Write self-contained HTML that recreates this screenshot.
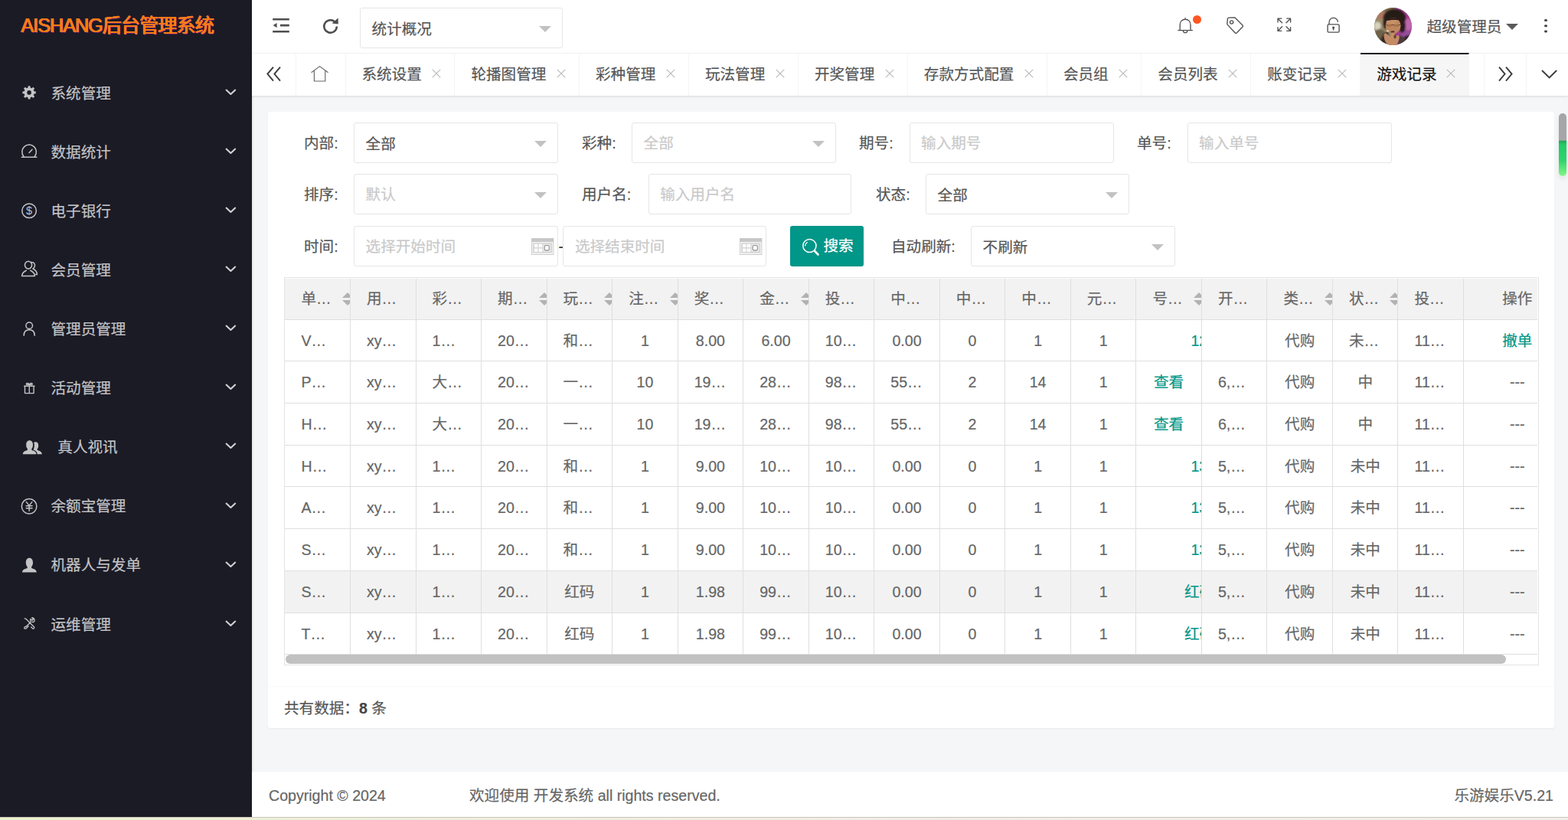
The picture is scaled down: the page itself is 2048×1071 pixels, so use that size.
<!DOCTYPE html><html lang="zh-CN"><head><meta charset="utf-8"><title>AISHANG后台管理系统</title><style>
*{box-sizing:border-box;margin:0;padding:0}
html,body{width:2048px;height:1071px;overflow:hidden;background:#f5f6f8}
body{position:relative;font-family:"Liberation Sans","Noto Sans CJK SC",sans-serif;font-size:19.6px;color:#555;-webkit-font-smoothing:antialiased;-webkit-text-stroke:.2px currentColor}
.abs{position:absolute}
svg{position:absolute;overflow:visible}
/* sidebar */
#side{position:absolute;left:0;top:0;width:329px;height:1067px;background:#1b1b26;box-shadow:1px 0 2px rgba(0,0,0,.1)}
#logo{-webkit-text-stroke:0;position:absolute;left:27.4px;top:14px;height:38px;line-height:38px;font-size:25.2px;letter-spacing:-1px;color:#fa7b0a;white-space:nowrap;
 text-shadow:-.45px 0 0 #ff7d4a,.45px 0 0 #ff7d4a,0 .45px 0 #ff7d4a,0 -.45px 0 #ff7d4a,.9px .7px 0 rgba(235,40,220,.42),-.8px -.5px 0 rgba(255,70,60,.3)}
.mi{position:absolute;left:0;width:329px;height:77px;line-height:78.5px;color:#c4c4c6;white-space:nowrap}
.mi span{position:absolute;left:66.5px;top:0}
/* header */
#hd{position:absolute;left:329px;top:0;width:1719px;height:70px;background:#fff;border-bottom:1px solid #f6f6f6}
#tabs{position:absolute;left:329px;top:70px;width:1719px;height:55px;background:#fff;box-shadow:0 1px 3px rgba(0,0,0,.12)}
.tab{position:absolute;top:0;height:55px;line-height:54px;border-right:1px solid #f5f5f5;color:#555;white-space:nowrap}
.tab span{position:absolute;left:21px;top:0}
.tab.on{background:#f6f6f6;color:#111;top:-1px;height:56px;border-top:2px solid #191a23;line-height:52px}
.sep{position:absolute;top:0;width:1px;height:55px;background:#f4f4f4}
/* card */
#card{position:absolute;left:350px;top:145.6px;width:1680px;height:805px;background:#fff;border-radius:3px;box-shadow:0 1px 2px rgba(0,0,0,.06)}
.lb{position:absolute;height:53px;line-height:55.6px;color:#555;white-space:nowrap}
.ip{position:absolute;height:53px;line-height:55px;border:1px solid #e6e6e6;border-radius:3px;background:#fff;padding-left:14.6px;color:#555;white-space:nowrap}
.ip.ph{color:#c9c9c9;line-height:52px}
.ip i{position:absolute;right:14px;top:23px;width:0;height:0;border:8.4px solid transparent;border-top-color:#c2c2c2;border-bottom-width:0}
#btn{position:absolute;left:1032.4px;top:295px;width:96px;height:53px;line-height:53px;background:#009688;color:#fff;border-radius:3px;white-space:nowrap}
/* table */
#tb{position:absolute;left:371px;top:362.4px;width:1639px;height:506.4px;border:1px solid #e4e4e4;overflow:hidden;background:#fff}
.r{position:absolute;left:0;width:1700px;border-bottom:1px solid #dfdfdf;color:#666}
.r.h{background:#f2f2f2}
.r.hv{background:#f2f2f2}
.c{position:absolute;top:0;height:100%;border-right:1px solid #dfdfdf;overflow:hidden;white-space:nowrap;padding:0 21px;text-align:left}
.c.m{text-align:center;padding:0}
.c a{color:#009688}
.c .st{position:absolute;left:74.5px;top:18px;width:14px;height:17px}
.c .st:before,.c .st:after{content:"";position:absolute;left:0;width:0;height:0;border:7px solid transparent}
.c .st:before{top:-7px;border-bottom-color:#b2b2b2}
.c .st:after{top:9.5px;border-top-color:#b2b2b2}
#foot{position:absolute;left:329px;top:1008px;width:1719px;height:59px;background:#fff;line-height:62px;color:#666;white-space:nowrap}
#strip{position:absolute;left:0;top:1067px;width:2048px;height:4px;background:linear-gradient(90deg,#eaf1cd 0,#efeee0 30%,#f2ece6 60%,#f1eeea 100%);border-top:1px solid #cac6b8}
</style></head><body>
<div id="side"><div id="logo">AISHANG后台管理系统</div>
<div class="mi" style="top:82.6px"><svg style="left:23px;top:23.5px" width="34" height="30" viewBox="0 0 34 30" ><path fill-rule="evenodd" fill="#c4c4c6" d="M21.51 13.31 L23.79 13.52 L23.79 16.28 L21.51 16.49 L20.75 18.30 L22.22 20.07 L20.27 22.02 L18.50 20.55 L16.69 21.31 L16.48 23.59 L13.72 23.59 L13.51 21.31 L11.70 20.55 L9.93 22.02 L7.98 20.07 L9.45 18.30 L8.69 16.49 L6.41 16.28 L6.41 13.52 L8.69 13.31 L9.45 11.50 L7.98 9.73 L9.93 7.78 L11.70 9.25 L13.51 8.49 L13.72 6.21 L16.48 6.21 L16.69 8.49 L18.50 9.25 L20.27 7.78 L22.22 9.73 L20.75 11.50Z M12.30 14.90 a2.80 2.80 0 1 0 5.60 0 a2.80 2.80 0 1 0 -5.60 0Z"/></svg><span>系统管理</span><svg style="left:292px;top:31.3px" width="18" height="14" viewBox="0 0 18 14" ><path fill="none" stroke="#d2d2d4" stroke-width="2.1" stroke-linecap="round" stroke-linejoin="round" d="M3.6 3.6 L9.4 9 L15.2 3.6"/></svg></div>
<div class="mi" style="top:159.7px"><svg style="left:23px;top:23.5px" width="34" height="30" viewBox="0 0 34 30" ><path fill="none" stroke="#c4c4c6" stroke-width="1.5" stroke-linecap="round" stroke-linejoin="round" d="M8 21.4 A9.3 9.3 0 1 1 22.2 21.4 M5.3 22.2 H24.9 M15.1 16.4 L19 12.2"/></svg><span>数据统计</span><svg style="left:292px;top:31.3px" width="18" height="14" viewBox="0 0 18 14" ><path fill="none" stroke="#d2d2d4" stroke-width="2.1" stroke-linecap="round" stroke-linejoin="round" d="M3.6 3.6 L9.4 9 L15.2 3.6"/></svg></div>
<div class="mi" style="top:236.8px"><svg style="left:23px;top:23.5px" width="34" height="30" viewBox="0 0 34 30" ><circle cx="15.1" cy="15.3" r="9.3" fill="none" stroke="#c4c4c6" stroke-width="1.5" stroke-linecap="round" stroke-linejoin="round"/><text x="15.1" y="20.3" font-family="Liberation Sans,sans-serif" font-size="14.5" text-anchor="middle" fill="#c4c4c6">$</text></svg><span>电子银行</span><svg style="left:292px;top:31.3px" width="18" height="14" viewBox="0 0 18 14" ><path fill="none" stroke="#d2d2d4" stroke-width="2.1" stroke-linecap="round" stroke-linejoin="round" d="M3.6 3.6 L9.4 9 L15.2 3.6"/></svg></div>
<div class="mi" style="top:313.9px"><svg style="left:23px;top:23.5px" width="34" height="30" viewBox="0 0 34 30" ><path fill="none" stroke="#c4c4c6" stroke-width="1.5" stroke-linecap="round" stroke-linejoin="round" d="M14 14.2 a4.6 5 0 1 1 0.1 0 M5.6 23.6 C5.6 18.6 9.4 17.4 11.4 16.2 M16.6 16.2 C18.6 17.4 22.4 18.6 22.4 23.6 H5.6 M18.2 5.6 C21.4 5.4 23 8 22.4 10.6 C22 12.4 21 13.4 20 14 C22.6 15.4 25.4 16.6 25.4 21.4 H23.6"/></svg><span>会员管理</span><svg style="left:292px;top:31.3px" width="18" height="14" viewBox="0 0 18 14" ><path fill="none" stroke="#d2d2d4" stroke-width="2.1" stroke-linecap="round" stroke-linejoin="round" d="M3.6 3.6 L9.4 9 L15.2 3.6"/></svg></div>
<div class="mi" style="top:391.0px"><svg style="left:23px;top:23.5px" width="34" height="30" viewBox="0 0 34 30" ><circle cx="15.2" cy="10.2" r="4.3" fill="none" stroke="#c4c4c6" stroke-width="1.5" stroke-linecap="round" stroke-linejoin="round" stroke-width="1.7"/><path fill="none" stroke="#c4c4c6" stroke-width="1.5" stroke-linecap="round" stroke-linejoin="round" stroke-width="1.7" d="M8.2 23.2 C8.2 18 11.2 15.8 15.2 15.8 C19.2 15.8 22.2 18 22.2 23.2"/></svg><span>管理员管理</span><svg style="left:292px;top:31.3px" width="18" height="14" viewBox="0 0 18 14" ><path fill="none" stroke="#d2d2d4" stroke-width="2.1" stroke-linecap="round" stroke-linejoin="round" d="M3.6 3.6 L9.4 9 L15.2 3.6"/></svg></div>
<div class="mi" style="top:468.1px"><svg style="left:23px;top:23.7px" width="34" height="30" viewBox="0 0 34 30" ><g transform="translate(15.2 15) scale(0.92 0.92) translate(-15.2 -15)"><path fill="none" stroke="#c4c4c6" stroke-width="1.5" stroke-linecap="round" stroke-linejoin="round" stroke-width="1.7" d="M9 12 H21.6 V22.2 H9 Z M8 12 H22.6 M15.3 9.6 V22.2 M15.3 9.4 C13.6 7.4 11 7.6 11 9.2 C11 10.2 12.6 10.4 15.3 9.6 C18 10.4 19.6 10.2 19.6 9.2 C19.6 7.6 17 7.4 15.3 9.4"/></g></svg><span>活动管理</span><svg style="left:292px;top:31.3px" width="18" height="14" viewBox="0 0 18 14" ><path fill="none" stroke="#d2d2d4" stroke-width="2.1" stroke-linecap="round" stroke-linejoin="round" d="M3.6 3.6 L9.4 9 L15.2 3.6"/></svg></div>
<div class="mi" style="top:545.2px"><svg style="left:23px;top:23.5px" width="34" height="30" viewBox="0 0 34 30" ><path fill="#c4c4c6" d="M6.8 24.2 C6.8 21 9.6 20.2 12.4 19 C13.2 18.6 13.2 17.6 12.6 16.8 C11.4 15.4 11.2 13.6 11.2 11.8 C11.2 8.6 12.8 6.2 15.6 6.2 C18.4 6.2 20 8.6 20 11.8 C20 13.6 19.8 15.4 18.6 16.8 C18 17.6 18 18.6 18.8 19 C21.6 20.2 24.4 21 24.4 24.2 Z"/><path fill="#c4c4c6" d="M21.2 9.2 C21.6 8.6 22.6 8.2 23.6 8.2 C26 8.2 27.2 10.2 27.2 12.8 C27.2 14.4 27 15.8 26 17 C25.4 17.8 25.6 18.6 26.2 19 C28.8 20 31.8 21 31.8 24.2 H25.8 C25.8 21.4 23.8 19.6 20.6 18.4 C21.6 16.6 21.8 14.6 21.8 12 C21.8 11 21.6 10 21.2 9.2 Z"/></svg><span style="left:75.3px">真人视讯</span><svg style="left:292px;top:31.3px" width="18" height="14" viewBox="0 0 18 14" ><path fill="none" stroke="#d2d2d4" stroke-width="2.1" stroke-linecap="round" stroke-linejoin="round" d="M3.6 3.6 L9.4 9 L15.2 3.6"/></svg></div>
<div class="mi" style="top:622.3px"><svg style="left:23px;top:23.5px" width="34" height="30" viewBox="0 0 34 30" ><circle cx="15.1" cy="15.3" r="9.8" fill="none" stroke="#c4c4c6" stroke-width="1.5" stroke-linecap="round" stroke-linejoin="round"/><path fill="none" stroke="#c4c4c6" stroke-width="1.5" stroke-linecap="round" stroke-linejoin="round" stroke-width="1.6" d="M11.4 9.6 L15.1 14.4 L18.8 9.6 M15.1 14.4 V21.2 M11.2 14.8 H19 M11.2 17.8 H19"/></svg><span>余额宝管理</span><svg style="left:292px;top:31.3px" width="18" height="14" viewBox="0 0 18 14" ><path fill="none" stroke="#d2d2d4" stroke-width="2.1" stroke-linecap="round" stroke-linejoin="round" d="M3.6 3.6 L9.4 9 L15.2 3.6"/></svg></div>
<div class="mi" style="top:699.4px"><svg style="left:23px;top:23.5px" width="34" height="30" viewBox="0 0 34 30" ><path fill="#c4c4c6" d="M6 24.6 C6 21 9 20.4 12 19.2 C13 18.8 13 17.8 12.4 17 C11.2 15.6 10.8 13.8 10.8 11.8 C10.8 8.4 12.4 5.8 15.4 5.8 C18.4 5.8 20 8.4 20 11.8 C20 13.8 19.6 15.6 18.4 17 C17.8 17.8 17.8 18.8 18.8 19.2 C21.8 20.4 24.8 21 24.8 24.6 Z"/></svg><span>机器人与发单</span><svg style="left:292px;top:31.3px" width="18" height="14" viewBox="0 0 18 14" ><path fill="none" stroke="#d2d2d4" stroke-width="2.1" stroke-linecap="round" stroke-linejoin="round" d="M3.6 3.6 L9.4 9 L15.2 3.6"/></svg></div>
<div class="mi" style="top:776.5px"><svg style="left:22.6px;top:22.7px" width="34" height="30" viewBox="0 0 34 30" ><g transform="translate(15.2 15) scale(0.88 0.88) translate(-15.2 -15)"><path fill="none" stroke="#c4c4c6" stroke-width="1.5" stroke-linecap="round" stroke-linejoin="round" stroke-width="1.75" d="M8.4 8 L10.2 8.4 L21.4 19.6 M20.2 18.4 L22.4 20.6 A1.6 1.6 0 0 1 20.2 22.8 L18 20.6 M17.6 13 L13.6 17 L10.4 20.2 A1.8 1.8 0 0 0 8 22.6 A1.8 1.8 0 0 0 10.6 22.6 L14 19.2 M17.6 13 A3.8 3.8 0 0 1 17.2 8.6 L19.4 10.8 L21.4 9 L19.2 6.8 A3.8 3.8 0 0 1 22.6 12.4 A3.8 3.8 0 0 1 19.4 13.2"/></g></svg><span>运维管理</span><svg style="left:292px;top:31.3px" width="18" height="14" viewBox="0 0 18 14" ><path fill="none" stroke="#d2d2d4" stroke-width="2.1" stroke-linecap="round" stroke-linejoin="round" d="M3.6 3.6 L9.4 9 L15.2 3.6"/></svg></div>
</div>
<div id="hd">
<svg style="left:26px;top:22px" width="24" height="22" viewBox="0 0 24 22" ><path fill="#4e4e4e" d="M1.2 1.9 H22.8 V4.5 H1.2Z M11 9.7 H22.8 V12.4 H11Z M1.2 18 H22.8 V20.6 H1.2Z M1.6 11.1 L6.6 7.9 V14.3Z"/></svg><svg style="left:90px;top:21px" width="26" height="26" viewBox="0 0 26 26" ><path fill="none" stroke="#4e4e4e" stroke-width="2.5" d="M19.6 9 A8.3 8.3 0 1 0 20.9 13.6"/><path fill="#4e4e4e" d="M14.6 9.6 L22.6 2.4 L22.8 10.6 Z"/></svg>
<div class="ip" style="left:141px;top:10.4px;width:265px;height:52.6px;line-height:55px;color:#555">统计概况<i style="top:23px"></i></div>
<svg style="left:1206px;top:20px" width="28" height="28" viewBox="0 0 28 28" ><path fill="none" stroke="#505050" stroke-width="1.35" stroke-linecap="round" stroke-linejoin="round" d="M3.8 19.6 H22.4 M6.2 19.6 V12.4 C6.2 8 9.2 5.2 13.1 5.2 C17 5.2 20 8 20 12.4 V19.6 M10.4 20.8 A2.8 2.8 0 0 0 15.8 20.8 M13.1 5.2 V3.6"/></svg><div class="abs" style="left:1228.6px;top:20px;width:11.4px;height:11.4px;border-radius:50%;background:#ff5722"></div><svg style="left:1270px;top:19px" width="28" height="28" viewBox="0 0 28 28" ><path fill="none" stroke="#505050" stroke-width="1.35" stroke-linecap="round" stroke-linejoin="round" d="M4.4 5.6 L3.8 12.6 L14.2 24 A1.4 1.4 0 0 0 16.2 24 L24 16 A1.4 1.4 0 0 0 24 14 L14 4 L6 4.2 A1.6 1.6 0 0 0 4.4 5.6 Z"/><circle cx="9.6" cy="10" r="2.1" fill="none" stroke="#505050" stroke-width="1.35" stroke-linecap="round" stroke-linejoin="round"/></svg><svg style="left:1337.8px;top:22.2px" width="21.4" height="21.4" viewBox="0 0 21.4 21.4" ><path fill="none" stroke="#505050" stroke-width="1.35" stroke-linecap="round" stroke-linejoin="round" stroke-width="1.25" d="M2 7 V2.2 H6.8 M2.2 2.4 L7.6 7.8 M13.8 2.2 H18.6 V7 M18.4 2.4 L13 7.8 M2 13.6 V18.4 H6.8 M2.2 18.2 L7.6 12.8 M18.6 13.6 V18.4 H13.8 M18.4 18.2 L13 12.8"/></svg><svg style="left:1401px;top:21px" width="24" height="26" viewBox="0 0 24 26" ><rect x="4.1" y="10.9" width="15" height="10.2" rx="1.3" fill="none" stroke="#505050" stroke-width="1.35" stroke-linecap="round" stroke-linejoin="round"/><path fill="none" stroke="#505050" stroke-width="1.35" stroke-linecap="round" stroke-linejoin="round" d="M6 10.6 V8.8 A5.6 5.6 0 0 1 17.4 7.4"/><path fill="#505050" d="M11.6 13.6 a1.5 1.5 0 0 1 .8 2.8 V18.6 H10.8 V16.4 a1.5 1.5 0 0 1 .8-2.8Z"/></svg><svg style="left:1466px;top:10px" width="49" height="49" viewBox="0 0 49 49"><defs><clipPath id="av"><circle cx="24.5" cy="24.5" r="24.4"/></clipPath><filter id="bl" x="-20%" y="-20%" width="140%" height="140%"><feGaussianBlur stdDeviation="1.1"/></filter><filter id="bs" x="-20%" y="-20%" width="140%" height="140%"><feGaussianBlur stdDeviation=".6"/></filter></defs><g clip-path="url(#av)"><rect width="49" height="49" fill="#8a7458"/><g filter="url(#bl)"><rect x="-2" y="-2" width="26" height="53" fill="#9a8a6c"/><ellipse cx="4" cy="24" rx="4.6" ry="5.6" fill="#d6d2bc"/><ellipse cx="8" cy="10" rx="6" ry="5" fill="#b0765e"/><ellipse cx="7" cy="36" rx="8" ry="8" fill="#6e6248"/><ellipse cx="20" cy="2" rx="12" ry="4" fill="#7c6a4c"/><rect x="27" y="-2" width="26" height="53" fill="#a03c8e"/><ellipse cx="44" cy="22" rx="6" ry="8" fill="#bc66ac"/><ellipse cx="42" cy="36" rx="7" ry="7" fill="#93509a"/><ellipse cx="45" cy="44" rx="9" ry="8" fill="#3a2230"/><ellipse cx="26.4" cy="13.6" rx="15" ry="12.2" fill="#261b18"/><ellipse cx="36.4" cy="24" rx="4.6" ry="9" fill="#2a1d1a"/><ellipse cx="14.6" cy="20" rx="3.4" ry="8" fill="#2e211c"/><path d="M6 49 C8 40 12 32 18 31 L22 49Z" fill="#352c2c"/><path d="M30 49 L32 36 C38 36 42 42 43 49Z" fill="#4a3a3e"/></g><g filter="url(#bs)"><ellipse cx="24.6" cy="23.6" rx="10" ry="10.6" fill="#bd865e"/><ellipse cx="22.6" cy="18" rx="7" ry="3.4" fill="#c69068"/><path d="M14 17.6 C17 12 31 11.6 35 17 C30 15.6 20 15.6 14 17.6Z" fill="#2a1d18"/><path d="M14 22.6 H34.4" stroke="#6a4a36" stroke-width="1" fill="none"/><ellipse cx="19.4" cy="23.4" rx="3.2" ry="1.6" fill="#a8744e"/><ellipse cx="28.6" cy="23.4" rx="3.2" ry="1.6" fill="#a8744e"/><path d="M12.6 38 C12 34 14 32.6 16 34 L21 38 C22 34 23 31 26 31.6 C27 33 26.6 36 27.6 37.6 C30 36 32 35.6 32.6 37.6 C33 41 31 46 29 49 L18 49 C15 46 13 42 12.6 38Z" fill="#c48c66"/><ellipse cx="24" cy="31.4" rx="2.6" ry="1.2" fill="#5a2e22"/><ellipse cx="27" cy="38" rx="1.6" ry="2.4" fill="#6a3c28"/><ellipse cx="17.4" cy="30.6" rx="1.6" ry="1" fill="#e8e2d6"/></g></g></svg><div class="abs" style="left:1637.6px;top:30.6px;width:0;height:0;border:8px solid transparent;border-top-color:#5a5a5a;border-bottom-width:0"></div><div class="abs" style="left:1688.4px;top:24.6px;width:3.2px;height:3.2px;border-radius:50%;background:#444;box-shadow:0 7.2px 0 #444,0 14.4px 0 #444"></div>
<div class="abs" style="left:1534.5px;top:0;height:70px;line-height:70px;color:#555;white-space:nowrap">超级管理员</div>
</div>
<div id="tabs">
<svg style="left:17px;top:15px" width="24" height="24" viewBox="0 0 24 24" ><path fill="none" stroke="#3c3c3c" stroke-width="1.9" stroke-linecap="butt" stroke-linejoin="miter" d="M11 2.6 L3.4 11.6 L11 20.6 M20 2.6 L12.4 11.6 L20 20.6"/></svg><div class="sep" style="left:57px"></div><svg style="left:76px;top:15px" width="26" height="24" viewBox="0 0 26 24" ><path fill="none" stroke="#666" stroke-width="1.15" stroke-linejoin="miter" d="M1.6 9.8 L12.6 1.6 L23.6 9.8 M5.4 7.4 V21 H19.8 V7.4"/></svg><div class="sep" style="left:122px"></div><div class="sep" style="left:1608.5px"></div><svg style="left:1625px;top:15px" width="24" height="24" viewBox="0 0 24 24" ><path fill="none" stroke="#3c3c3c" stroke-width="1.9" stroke-linecap="butt" stroke-linejoin="miter" d="M4 2.6 L11.6 11.6 L4 20.6 M13 2.6 L20.6 11.6 L13 20.6"/></svg><div class="sep" style="left:1664px"></div><svg style="left:1683px;top:17px" width="24" height="20" viewBox="0 0 24 20" ><path fill="none" stroke="#3c3c3c" stroke-width="1.9" stroke-linecap="butt" stroke-linejoin="miter" d="M2 5 L11.6 14.4 L21.2 5"/></svg>
<div class="tab" style="left:122.5px;width:142.9px"><span>系统设置</span><svg style="right:17px;top:20px" width="12" height="12" viewBox="0 0 12 12"><path fill="none" stroke="#b8b8b8" stroke-width="1.1" d="M.8 .8 L11.2 11.2 M11.2 .8 L.8 11.2"/></svg></div>
<div class="tab" style="left:265.4px;width:162.5px"><span>轮播图管理</span><svg style="right:17px;top:20px" width="12" height="12" viewBox="0 0 12 12"><path fill="none" stroke="#b8b8b8" stroke-width="1.1" d="M.8 .8 L11.2 11.2 M11.2 .8 L.8 11.2"/></svg></div>
<div class="tab" style="left:428.0px;width:142.9px"><span>彩种管理</span><svg style="right:17px;top:20px" width="12" height="12" viewBox="0 0 12 12"><path fill="none" stroke="#b8b8b8" stroke-width="1.1" d="M.8 .8 L11.2 11.2 M11.2 .8 L.8 11.2"/></svg></div>
<div class="tab" style="left:570.9px;width:142.9px"><span>玩法管理</span><svg style="right:17px;top:20px" width="12" height="12" viewBox="0 0 12 12"><path fill="none" stroke="#b8b8b8" stroke-width="1.1" d="M.8 .8 L11.2 11.2 M11.2 .8 L.8 11.2"/></svg></div>
<div class="tab" style="left:713.9px;width:142.9px"><span>开奖管理</span><svg style="right:17px;top:20px" width="12" height="12" viewBox="0 0 12 12"><path fill="none" stroke="#b8b8b8" stroke-width="1.1" d="M.8 .8 L11.2 11.2 M11.2 .8 L.8 11.2"/></svg></div>
<div class="tab" style="left:856.8px;width:182.1px"><span>存款方式配置</span><svg style="right:17px;top:20px" width="12" height="12" viewBox="0 0 12 12"><path fill="none" stroke="#b8b8b8" stroke-width="1.1" d="M.8 .8 L11.2 11.2 M11.2 .8 L.8 11.2"/></svg></div>
<div class="tab" style="left:1038.9px;width:123.3px"><span>会员组</span><svg style="right:17px;top:20px" width="12" height="12" viewBox="0 0 12 12"><path fill="none" stroke="#b8b8b8" stroke-width="1.1" d="M.8 .8 L11.2 11.2 M11.2 .8 L.8 11.2"/></svg></div>
<div class="tab" style="left:1162.3px;width:142.9px"><span>会员列表</span><svg style="right:17px;top:20px" width="12" height="12" viewBox="0 0 12 12"><path fill="none" stroke="#b8b8b8" stroke-width="1.1" d="M.8 .8 L11.2 11.2 M11.2 .8 L.8 11.2"/></svg></div>
<div class="tab" style="left:1305.2px;width:142.9px"><span>账变记录</span><svg style="right:17px;top:20px" width="12" height="12" viewBox="0 0 12 12"><path fill="none" stroke="#b8b8b8" stroke-width="1.1" d="M.8 .8 L11.2 11.2 M11.2 .8 L.8 11.2"/></svg></div>
<div class="tab on" style="left:1448.2px;width:141.8px"><span>游戏记录</span><svg style="right:17px;top:19px" width="12" height="12" viewBox="0 0 12 12"><path fill="none" stroke="#b8b8b8" stroke-width="1.1" d="M.8 .8 L11.2 11.2 M11.2 .8 L.8 11.2"/></svg></div>
</div>
<div id="card"><div class="abs" style="left:0;top:750.5px;width:1680px;height:1px;background:#fafafa"></div></div>
<div class="lb" style="left:397px;top:160px">内部:</div>
<div class="ip" style="left:462px;top:160px;width:267px">全部<i></i></div>
<div class="lb" style="left:760px;top:160px">彩种:</div>
<div class="ip ph" style="left:825px;top:160px;width:267px">全部<i></i></div>
<div class="lb" style="left:1122px;top:160px">期号:</div>
<div class="ip ph" style="left:1187.5px;top:160px;width:267px">输入期号</div>
<div class="lb" style="left:1485px;top:160px">单号:</div>
<div class="ip ph" style="left:1550.5px;top:160px;width:267px">输入单号</div>
<div class="lb" style="left:397px;top:227.3px">排序:</div>
<div class="ip ph" style="left:462px;top:227.3px;width:267px">默认<i></i></div>
<div class="lb" style="left:760px;top:227.3px">用户名:</div>
<div class="ip ph" style="left:846.6px;top:227.3px;width:265.8px">输入用户名</div>
<div class="lb" style="left:1144px;top:227.3px">状态:</div>
<div class="ip" style="left:1209px;top:227.3px;width:266.4px">全部<i></i></div>
<div class="lb" style="left:397px;top:295px">时间:</div>
<div class="ip ph" style="left:462px;top:295px;width:267px">选择开始时间<svg style="left:230.6px;top:15.2px" width="29.4" height="22" viewBox="0 0 29.4 22"><rect x=".5" y=".5" width="28.4" height="21" fill="#f0f0f0" stroke="#d0d0d0"/><rect x=".4" y=".3" width="28.6" height="4.6" fill="#c7c7c7"/><rect x="2.9" y="7" width="23.4" height="11.6" fill="#dcdcdc" stroke="#cbcbcb" stroke-width=".9"/><path fill="#fff" d="M4 7.8h4.2v4H4z M9.7 7.8h4.4v4H9.7z M4 13.8h4.2v4.1H4z M9.7 13.8h4.4v4.1H9.7z"/><rect x="15.4" y="7.8" width="10" height="10.1" fill="#e8e8e8"/><rect x="17.2" y="9.6" width="6.2" height="6.4" rx="1.8" fill="#fff" stroke="#9c9c9c" stroke-width="1.3"/></svg></div>
<div class="abs" style="left:729.5px;top:295px;height:53px;line-height:55px;color:#333">-</div>
<div class="ip ph" style="left:735.3px;top:295px;width:265.6px">选择结束时间<svg style="left:229.6px;top:15.2px" width="29.4" height="22" viewBox="0 0 29.4 22"><rect x=".5" y=".5" width="28.4" height="21" fill="#f0f0f0" stroke="#d0d0d0"/><rect x=".4" y=".3" width="28.6" height="4.6" fill="#c7c7c7"/><rect x="2.9" y="7" width="23.4" height="11.6" fill="#dcdcdc" stroke="#cbcbcb" stroke-width=".9"/><path fill="#fff" d="M4 7.8h4.2v4H4z M9.7 7.8h4.4v4H9.7z M4 13.8h4.2v4.1H4z M9.7 13.8h4.4v4.1H9.7z"/><rect x="15.4" y="7.8" width="10" height="10.1" fill="#e8e8e8"/><rect x="17.2" y="9.6" width="6.2" height="6.4" rx="1.8" fill="#fff" stroke="#9c9c9c" stroke-width="1.3"/></svg></div>
<div id="btn"><svg style="left:14px;top:15px" width="28" height="28" viewBox="0 0 28 28"><circle cx="11.4" cy="11" r="8.6" fill="none" stroke="#fff" stroke-width="1.5"/><path fill="none" stroke="#fff" stroke-width="2.8" stroke-linecap="round" d="M18.2 18 L22.4 22.4"/><path fill="none" stroke="#fff" stroke-width="1.2" stroke-linecap="round" d="M5.6 11 A6 6 0 0 1 8.4 6.6"/></svg><span class="abs" style="left:43px;top:0">搜索</span></div>
<div class="lb" style="left:1164px;top:295px">自动刷新:</div>
<div class="ip" style="left:1268px;top:295px;width:267px">不刷新<i></i></div>
<div id="tb"><div class="abs" style="left:0;top:.9px;width:1636.3px;height:504px;overflow:hidden">
<div class="r h" style="top:0;height:53.4px;line-height:53px"><div class="c" style="left:0.50px;width:85.53px">单…<b class="st"></b></div><div class="c" style="left:86.03px;width:85.53px">用…</div><div class="c" style="left:171.56px;width:85.53px">彩…</div><div class="c" style="left:257.09px;width:85.53px">期…<b class="st"></b></div><div class="c" style="left:342.62px;width:85.53px">玩…<b class="st"></b></div><div class="c" style="left:428.15px;width:85.53px">注…<b class="st"></b></div><div class="c" style="left:513.68px;width:85.53px">奖…</div><div class="c" style="left:599.21px;width:85.53px">金…<b class="st"></b></div><div class="c" style="left:684.74px;width:85.53px">投…</div><div class="c" style="left:770.27px;width:85.53px">中…</div><div class="c" style="left:855.80px;width:85.53px">中…</div><div class="c" style="left:941.33px;width:85.53px">中…</div><div class="c" style="left:1026.86px;width:85.53px">元…</div><div class="c" style="left:1112.39px;width:85.53px">号…<b class="st"></b></div><div class="c" style="left:1197.92px;width:85.53px">开…</div><div class="c" style="left:1283.45px;width:85.53px">类…<b class="st"></b></div><div class="c" style="left:1368.98px;width:85.53px">状…<b class="st"></b></div><div class="c" style="left:1454.51px;width:85.53px">投…</div><div class="c m" style="left:1540.04px;width:140.60px">操作</div></div>
<div class="r" style="top:53.4px;height:54.7px;line-height:54px"><div class="c" style="left:0.50px;width:85.53px">V…</div><div class="c" style="left:86.03px;width:85.53px">xy…</div><div class="c" style="left:171.56px;width:85.53px">1…</div><div class="c" style="left:257.09px;width:85.53px">20…</div><div class="c" style="left:342.62px;width:85.53px">和…</div><div class="c m" style="left:428.15px;width:85.53px">1</div><div class="c m" style="left:513.68px;width:85.53px">8.00</div><div class="c m" style="left:599.21px;width:85.53px">6.00</div><div class="c" style="left:684.74px;width:85.53px">10…</div><div class="c m" style="left:770.27px;width:85.53px">0.00</div><div class="c m" style="left:855.80px;width:85.53px">0</div><div class="c m" style="left:941.33px;width:85.53px">1</div><div class="c m" style="left:1026.86px;width:85.53px">1</div><div class="c m" style="left:1112.39px;width:85.53px"><a style="position:absolute;left:71px;top:0">12</a></div><div class="c m" style="left:1197.92px;width:85.53px"></div><div class="c m" style="left:1283.45px;width:85.53px">代购</div><div class="c" style="left:1368.98px;width:85.53px">未…</div><div class="c" style="left:1454.51px;width:85.53px">11…</div><div class="c m" style="left:1540.04px;width:140.60px"><a>撤单</a></div></div>
<div class="r" style="top:108.1px;height:54.7px;line-height:54px"><div class="c" style="left:0.50px;width:85.53px">P…</div><div class="c" style="left:86.03px;width:85.53px">xy…</div><div class="c" style="left:171.56px;width:85.53px">大…</div><div class="c" style="left:257.09px;width:85.53px">20…</div><div class="c" style="left:342.62px;width:85.53px">一…</div><div class="c m" style="left:428.15px;width:85.53px">10</div><div class="c" style="left:513.68px;width:85.53px">19…</div><div class="c" style="left:599.21px;width:85.53px">28…</div><div class="c" style="left:684.74px;width:85.53px">98…</div><div class="c" style="left:770.27px;width:85.53px">55…</div><div class="c m" style="left:855.80px;width:85.53px">2</div><div class="c m" style="left:941.33px;width:85.53px">14</div><div class="c m" style="left:1026.86px;width:85.53px">1</div><div class="c m" style="left:1112.39px;width:85.53px"><a>查看</a></div><div class="c" style="left:1197.92px;width:85.53px">6,…</div><div class="c m" style="left:1283.45px;width:85.53px">代购</div><div class="c m" style="left:1368.98px;width:85.53px">中</div><div class="c" style="left:1454.51px;width:85.53px">11…</div><div class="c m" style="left:1540.04px;width:140.60px">---</div></div>
<div class="r" style="top:162.8px;height:54.7px;line-height:54px"><div class="c" style="left:0.50px;width:85.53px">H…</div><div class="c" style="left:86.03px;width:85.53px">xy…</div><div class="c" style="left:171.56px;width:85.53px">大…</div><div class="c" style="left:257.09px;width:85.53px">20…</div><div class="c" style="left:342.62px;width:85.53px">一…</div><div class="c m" style="left:428.15px;width:85.53px">10</div><div class="c" style="left:513.68px;width:85.53px">19…</div><div class="c" style="left:599.21px;width:85.53px">28…</div><div class="c" style="left:684.74px;width:85.53px">98…</div><div class="c" style="left:770.27px;width:85.53px">55…</div><div class="c m" style="left:855.80px;width:85.53px">2</div><div class="c m" style="left:941.33px;width:85.53px">14</div><div class="c m" style="left:1026.86px;width:85.53px">1</div><div class="c m" style="left:1112.39px;width:85.53px"><a>查看</a></div><div class="c" style="left:1197.92px;width:85.53px">6,…</div><div class="c m" style="left:1283.45px;width:85.53px">代购</div><div class="c m" style="left:1368.98px;width:85.53px">中</div><div class="c" style="left:1454.51px;width:85.53px">11…</div><div class="c m" style="left:1540.04px;width:140.60px">---</div></div>
<div class="r" style="top:217.5px;height:54.7px;line-height:54px"><div class="c" style="left:0.50px;width:85.53px">H…</div><div class="c" style="left:86.03px;width:85.53px">xy…</div><div class="c" style="left:171.56px;width:85.53px">1…</div><div class="c" style="left:257.09px;width:85.53px">20…</div><div class="c" style="left:342.62px;width:85.53px">和…</div><div class="c m" style="left:428.15px;width:85.53px">1</div><div class="c m" style="left:513.68px;width:85.53px">9.00</div><div class="c" style="left:599.21px;width:85.53px">10…</div><div class="c" style="left:684.74px;width:85.53px">10…</div><div class="c m" style="left:770.27px;width:85.53px">0.00</div><div class="c m" style="left:855.80px;width:85.53px">0</div><div class="c m" style="left:941.33px;width:85.53px">1</div><div class="c m" style="left:1026.86px;width:85.53px">1</div><div class="c m" style="left:1112.39px;width:85.53px"><a style="position:absolute;left:71px;top:0">13</a></div><div class="c" style="left:1197.92px;width:85.53px">5,…</div><div class="c m" style="left:1283.45px;width:85.53px">代购</div><div class="c m" style="left:1368.98px;width:85.53px">未中</div><div class="c" style="left:1454.51px;width:85.53px">11…</div><div class="c m" style="left:1540.04px;width:140.60px">---</div></div>
<div class="r" style="top:272.2px;height:54.7px;line-height:54px"><div class="c" style="left:0.50px;width:85.53px">A…</div><div class="c" style="left:86.03px;width:85.53px">xy…</div><div class="c" style="left:171.56px;width:85.53px">1…</div><div class="c" style="left:257.09px;width:85.53px">20…</div><div class="c" style="left:342.62px;width:85.53px">和…</div><div class="c m" style="left:428.15px;width:85.53px">1</div><div class="c m" style="left:513.68px;width:85.53px">9.00</div><div class="c" style="left:599.21px;width:85.53px">10…</div><div class="c" style="left:684.74px;width:85.53px">10…</div><div class="c m" style="left:770.27px;width:85.53px">0.00</div><div class="c m" style="left:855.80px;width:85.53px">0</div><div class="c m" style="left:941.33px;width:85.53px">1</div><div class="c m" style="left:1026.86px;width:85.53px">1</div><div class="c m" style="left:1112.39px;width:85.53px"><a style="position:absolute;left:71px;top:0">13</a></div><div class="c" style="left:1197.92px;width:85.53px">5,…</div><div class="c m" style="left:1283.45px;width:85.53px">代购</div><div class="c m" style="left:1368.98px;width:85.53px">未中</div><div class="c" style="left:1454.51px;width:85.53px">11…</div><div class="c m" style="left:1540.04px;width:140.60px">---</div></div>
<div class="r" style="top:326.9px;height:54.7px;line-height:54px"><div class="c" style="left:0.50px;width:85.53px">S…</div><div class="c" style="left:86.03px;width:85.53px">xy…</div><div class="c" style="left:171.56px;width:85.53px">1…</div><div class="c" style="left:257.09px;width:85.53px">20…</div><div class="c" style="left:342.62px;width:85.53px">和…</div><div class="c m" style="left:428.15px;width:85.53px">1</div><div class="c m" style="left:513.68px;width:85.53px">9.00</div><div class="c" style="left:599.21px;width:85.53px">10…</div><div class="c" style="left:684.74px;width:85.53px">10…</div><div class="c m" style="left:770.27px;width:85.53px">0.00</div><div class="c m" style="left:855.80px;width:85.53px">0</div><div class="c m" style="left:941.33px;width:85.53px">1</div><div class="c m" style="left:1026.86px;width:85.53px">1</div><div class="c m" style="left:1112.39px;width:85.53px"><a style="position:absolute;left:71px;top:0">13</a></div><div class="c" style="left:1197.92px;width:85.53px">5,…</div><div class="c m" style="left:1283.45px;width:85.53px">代购</div><div class="c m" style="left:1368.98px;width:85.53px">未中</div><div class="c" style="left:1454.51px;width:85.53px">11…</div><div class="c m" style="left:1540.04px;width:140.60px">---</div></div>
<div class="r hv" style="top:381.6px;height:54.7px;line-height:54px"><div class="c" style="left:0.50px;width:85.53px">S…</div><div class="c" style="left:86.03px;width:85.53px">xy…</div><div class="c" style="left:171.56px;width:85.53px">1…</div><div class="c" style="left:257.09px;width:85.53px">20…</div><div class="c m" style="left:342.62px;width:85.53px">红码</div><div class="c m" style="left:428.15px;width:85.53px">1</div><div class="c m" style="left:513.68px;width:85.53px">1.98</div><div class="c" style="left:599.21px;width:85.53px">99…</div><div class="c" style="left:684.74px;width:85.53px">10…</div><div class="c m" style="left:770.27px;width:85.53px">0.00</div><div class="c m" style="left:855.80px;width:85.53px">0</div><div class="c m" style="left:941.33px;width:85.53px">1</div><div class="c m" style="left:1026.86px;width:85.53px">1</div><div class="c m" style="left:1112.39px;width:85.53px"><a style="position:absolute;left:62.5px;top:0">红码</a></div><div class="c" style="left:1197.92px;width:85.53px">5,…</div><div class="c m" style="left:1283.45px;width:85.53px">代购</div><div class="c m" style="left:1368.98px;width:85.53px">未中</div><div class="c" style="left:1454.51px;width:85.53px">11…</div><div class="c m" style="left:1540.04px;width:140.60px">---</div></div>
<div class="r" style="top:436.3px;height:54.7px;line-height:54px"><div class="c" style="left:0.50px;width:85.53px">T…</div><div class="c" style="left:86.03px;width:85.53px">xy…</div><div class="c" style="left:171.56px;width:85.53px">1…</div><div class="c" style="left:257.09px;width:85.53px">20…</div><div class="c m" style="left:342.62px;width:85.53px">红码</div><div class="c m" style="left:428.15px;width:85.53px">1</div><div class="c m" style="left:513.68px;width:85.53px">1.98</div><div class="c" style="left:599.21px;width:85.53px">99…</div><div class="c" style="left:684.74px;width:85.53px">10…</div><div class="c m" style="left:770.27px;width:85.53px">0.00</div><div class="c m" style="left:855.80px;width:85.53px">0</div><div class="c m" style="left:941.33px;width:85.53px">1</div><div class="c m" style="left:1026.86px;width:85.53px">1</div><div class="c m" style="left:1112.39px;width:85.53px"><a style="position:absolute;left:62.5px;top:0">红码</a></div><div class="c" style="left:1197.92px;width:85.53px">5,…</div><div class="c m" style="left:1283.45px;width:85.53px">代购</div><div class="c m" style="left:1368.98px;width:85.53px">未中</div><div class="c" style="left:1454.51px;width:85.53px">11…</div><div class="c m" style="left:1540.04px;width:140.60px">---</div></div>
<div class="abs" style="left:.5px;top:491px;width:1594px;height:12px;border-radius:6px;background:#c1c1c1"></div></div>
</div>
<div class="abs" style="left:371px;top:905px;height:40px;line-height:40px;color:#555;white-space:nowrap">共有数据：<b style="color:#444">8</b> 条</div>
<div class="abs" style="left:2036px;top:148px;width:10px;height:82px;border-radius:5px;background:linear-gradient(180deg,#a6a6a8 0,#a6a6a8 43%,#1fa855 44%,#22cc66 50%,#2fd46d 75%,#86f586 100%);box-shadow:0 4px 6px rgba(0,0,0,.08)"></div>
<div id="foot"><span class="abs" style="left:22px">Copyright © 2024</span><span class="abs" style="left:284px">欢迎使用 开发系统 all rights reserved.</span><span class="abs" style="right:19px">乐游娱乐V5.21</span></div>
<div id="strip"></div>
</body></html>
